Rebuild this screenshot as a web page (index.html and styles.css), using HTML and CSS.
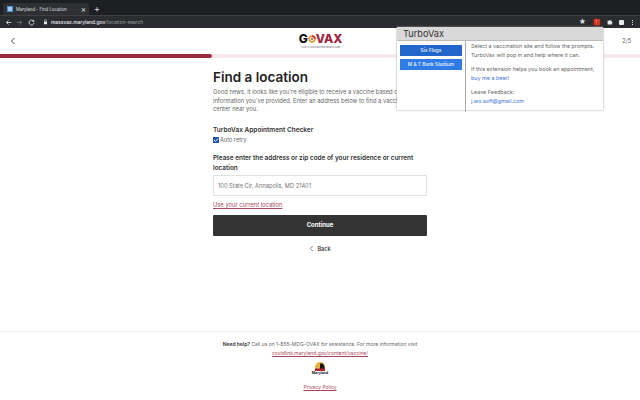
FILE: index.html
```html
<!DOCTYPE html>
<html>
	<head>
		<title>Maryland - Find Location</title>
		<link rel="stylesheet" href="styles.css">
	</head>
	<body>
		<div class="tabstrip">
			<div class="tab">
				<span class="tab-icon"></span>
				<span class="tab-title">Maryland - Find Location</span>
				<span class="tab-close">&#215;</span>
			</div>
			<span class="tab-new">+</span>
		</div>

		<div class="toolbar">
			<svg class="nav-icon" viewBox="0 0 10 10"><path d="M9 5H2M5 2 2 5l3 3" fill="none" stroke="#e8eaed" stroke-width="1.2"/></svg>
			<svg class="nav-icon" viewBox="0 0 10 10"><path d="M1 5h7M5 2l3 3-3 3" fill="none" stroke="#6f7175" stroke-width="1.2"/></svg>
			<svg class="nav-icon" viewBox="0 0 10 10"><path d="M8 3.200A3.500 3.500 0 1 0 8.500 5.500" fill="none" stroke="#e8eaed" stroke-width="1.200"/><path d="M8.800 1v3h-3z" fill="#e8eaed"/></svg>
			<svg class="lock" viewBox="0 0 6 8"><path d="M1 3.500h4v3.500H1z" fill="#e8eaed"/><path d="M1.800 3.500V2a1.200 1.200 0 0 1 2.400 0v1.500" fill="none" stroke="#e8eaed" stroke-width=".8"/></svg>
			<div class="url"><b>massvax.maryland.gov</b>/location-search</div>
			<div class="toolbar-right">
				<span class="star">&#9733;</span>
				<span class="ext-badge"><span class="ext-letter">T</span></span>
				<svg class="puzzle" viewBox="0 0 10 10"><path d="M1 3h2.500a1.200 1.200 0 0 1 2.400 0H8v2.200a1.200 1.200 0 0 1 0 2.400V9H1z" fill="#e8eaed"/></svg>
				<span class="ext-square"></span>
				<span class="menu-dots"><i></i><i></i><i></i></span>
			</div>
		</div>

		<div class="page">
			<div class="page-head">
				<svg class="back-chevron" viewBox="0 0 6 8"><path d="M4.500 1 1.500 4l3 3" fill="none" stroke="#444" stroke-width="1"/></svg>
				<div class="logo">
					<div class="logo-word"><span class="logo-g">G</span><svg class="logo-o" viewBox="0 0 10 10"><circle cx="5" cy="5" r="3.600" fill="none" stroke="#e0a030" stroke-width="2"/><path d="M5 1.400A3.600 3.600 0 0 1 8.600 5" fill="none" stroke="#c8322e" stroke-width="2"/><circle cx="5" cy="5" r="1.200" fill="#c8322e"/></svg><span class="logo-vax">VAX</span></div>
					<div class="logo-sub">LIVE A VACCINATED MARYLAND</div>
				</div>
				<div class="step">2/5</div>
			</div>
			<div class="progress"><div class="progress-fill"></div></div>

			<div class="content">
				<h1>Find a location</h1>
				<p class="intro">Good news, it looks like you're eligible to receive a vaccine based on the information you've provided. Enter an address below to find a vaccination center near you.</p>
				<div class="checker-title">TurboVax Appointment Checker</div>
				<label class="checker-row"><span class="check"><svg viewBox="0 0 6 6"><path d="M1 3l1.500 1.500L5 1.500" fill="none" stroke="#fff" stroke-width=".9"/></svg></span>Auto retry</label>
				<div class="field-label">Please enter the address or zip code of your residence or current location</div>
				<div class="address-input">100 State Cir, Annapolis, MD 21401</div>
				<a class="current-loc">Use your current location</a>
				<div class="continue">Continue</div>
				<div class="back"><svg viewBox="0 0 6 8"><path d="M4.500 1 1.500 4l3 3" fill="none" stroke="#444" stroke-width=".8"/></svg>Back</div>
			</div>

			<div class="footer">
				<div class="help"><b>Need help?</b> Call us on 1-855-MDG-OVAX for assistance. For more information visit</div>
				<a class="footer-link">covidlink.maryland.gov/content/vaccine/</a>
				<div class="md-logo">
					<svg viewBox="0 0 18 9"><path d="M4 9V5a5 5 0 0 1 10 0v4z" fill="#e9b23c"/><path d="M9 1.500h3l1.500 3v4.500H9z" fill="#1a1a1a"/><path d="M4 6.500h10V9H4z" fill="#b3232f"/></svg>
					<div class="md-word">Maryland</div>
				</div>
				<a class="footer-link privacy">Privacy Policy</a>
			</div>
		</div>

		<div class="popup">
			<div class="popup-head">TurboVax</div>
			<div class="popup-body">
				<div class="popup-sites">
					<div class="site-btn">Six Flags</div>
					<div class="site-btn light">M &amp; T Bank Stadium</div>
				</div>
				<div class="popup-text">
					<p>Select a vaccination site and follow the prompts. TurboVax will pop in and help where it can.</p>
					<p>If this extension helps you book an appointment, <a>buy me a beer!</a></p>
					<p>Leave Feedback:<br><a>j.wo.soft@gmail.com</a></p>
				</div>
			</div>
		</div>
	</body>
</html>
```

FILE: styles.css
```css
html, body {
	margin: 0;
	padding: 0;
}

body {
	width: 640px;
	height: 400px;
	overflow: hidden;
	display: flex;
	flex-direction: column;
	background-color: #fff;
	font-family: "Inter", "Liberation Sans", sans-serif;
	color: #444;
}

.tabstrip {
	height: 15px;
	flex: none;
	display: flex;
	align-items: flex-end;
	background-color: #1e1f22;
	padding-left: 3px;
}

.tab {
	width: 86px;
	height: 12px;
	box-sizing: border-box;
	display: flex;
	align-items: center;
	padding: 0 3px 0 4px;
	background-color: #2f3034;
	border-radius: 3px 3px 0 0;
}

.tab-icon {
	width: 4px;
	height: 4px;
	border: 1px solid #4a90d9;
	background-color: #a9c8ea;
	margin-right: 3px;
}

.tab-title {
	flex: 1;
	font-size: 4.300px;
	color: #dfe1e5;
	white-space: nowrap;
}

.tab-close {
	font-size: 8px;
	line-height: 8px;
	color: #dfe1e5;
}

.tab-new {
	margin-left: 5px;
	height: 12px;
	font-size: 9px;
	line-height: 12px;
	color: #dfe1e5;
}

.toolbar {
	height: 13px;
	flex: none;
	display: flex;
	align-items: center;
	padding-left: 4px;
	background-color: #2b2c30;
	border-top: 1px solid #3f4044;
	box-sizing: border-box;
}

.nav-icon {
	width: 7px;
	height: 7px;
	margin-right: 4px;
	margin-left: .5px;
}

.lock {
	width: 5px;
	height: 6px;
	margin-left: 4px;
	margin-right: 3.500px;
}

.url {
	font-size: 4.900px;
	color: #9aa0a6;
	white-space: nowrap;
}

.url b {
	color: #e8eaed;
	font-weight: 500;
}

.toolbar-right {
	margin-left: auto;
	display: flex;
	align-items: center;
	gap: 6px;
	padding-right: 7px;
}

.star {
	font-size: 7px;
	line-height: 8px;
	color: #dfe1e5;
}

.ext-badge {
	width: 9px;
	height: 9px;
	border-radius: 50%;
	background-color: #5a2a26;
	display: flex;
	align-items: center;
	justify-content: center;
}

.ext-letter {
	width: 6px;
	height: 6px;
	border-radius: 1px;
	background-color: #d5361f;
	color: #f4b9a8;
	font-size: 4px;
	line-height: 6px;
	text-align: center;
}

.puzzle {
	width: 6px;
	height: 6px;
}

.ext-square {
	width: 5px;
	height: 5px;
	background-color: #e8eaed;
	border-radius: 1px;
}

.menu-dots {
	display: flex;
	flex-direction: column;
	gap: 1px;
	margin-left: 2px;
}

.menu-dots i {
	width: 1px;
	height: 1px;
	background-color: #dfe1e5;
}

.page {
	flex: 1;
	display: flex;
	flex-direction: column;
}

.page-head {
	height: 26px;
	flex: none;
	display: flex;
	align-items: center;
	justify-content: space-between;
	padding: 0 9px 0 10px;
}

.back-chevron {
	width: 6px;
	height: 8px;
}

.logo {
	text-align: center;
	margin-left: 3px;
}

.logo-word {
	display: flex;
	align-items: center;
	height: 11px;
	font-size: 12px;
	font-weight: 800;
	line-height: 11px;
}

.logo-g {
	color: #111;
}

.logo-o {
	width: 8px;
	height: 8px;
}

.logo-vax {
	color: #a3223c;
}

.logo-sub {
	margin-top: 2px;
	font-size: 2.500px;
	line-height: 3px;
	color: #555;
	white-space: nowrap;
}

.step {
	font-size: 5.500px;
	color: #555;
}

.progress {
	height: 4px;
	flex: none;
	background-color: #f6eaec;
}

.progress-fill {
	width: 212px;
	height: 4px;
	background-color: #9b2c42;
	border-radius: 0 2px 2px 0;
}

.content {
	width: 214px;
	margin-left: 213px;
	flex: 1;
}

h1 {
	margin: 11px 0 0;
	font-size: 13.500px;
	line-height: 16px;
	font-weight: 600;
	color: #222;
}

.intro {
	margin: 3px 0 0;
	font-size: 5.800px;
	line-height: 8.700px;
	color: #666;
}

.checker-title {
	margin-top: 12px;
	font-size: 6.500px;
	line-height: 9px;
	font-weight: 600;
	color: #333;
}

.checker-row {
	display: flex;
	align-items: center;
	height: 9px;
	font-size: 5.600px;
	color: #666;
}

.check {
	width: 6px;
	height: 6px;
	margin-right: 1px;
	background-color: #1f55b5;
	display: flex;
}

.field-label {
	margin-top: 9px;
	font-size: 6.400px;
	line-height: 10px;
	font-weight: 600;
	color: #333;
}

.address-input {
	margin-top: 2px;
	height: 21px;
	box-sizing: border-box;
	border: 1px solid #e2e2e2;
	padding: 0 4px;
	font-size: 5.700px;
	line-height: 19px;
	color: #777;
}

.current-loc {
	display: block;
	margin-top: 5px;
	font-size: 5.800px;
	line-height: 8px;
	color: #a5485c;
	text-decoration: underline;
}

.continue {
	margin-top: 6px;
	height: 20.500px;
	background-color: #333;
	border-radius: 1px;
	color: #fff;
	font-size: 6px;
	font-weight: 700;
	line-height: 20px;
	text-align: center;
}

.back {
	margin-top: 8.500px;
	display: flex;
	align-items: center;
	justify-content: center;
	gap: 3px;
	height: 9px;
	font-size: 5.500px;
	font-weight: 600;
}

.back svg {
	width: 5px;
	height: 7px;
}

.footer {
	height: 69px;
	flex: none;
	box-sizing: border-box;
	border-top: 1px solid #f0f0f0;
	padding-top: 8px;
	display: flex;
	flex-direction: column;
	align-items: center;
}

.help {
	font-size: 5px;
	line-height: 9px;
	color: #666;
}

.help b {
	color: #333;
	font-weight: 600;
}

.footer-link {
	font-size: 5px;
	line-height: 9px;
	color: #a5485c;
	text-decoration: underline;
}

.md-logo {
	margin-top: 4px;
	width: 18px;
	text-align: center;
}

.md-logo svg {
	display: block;
	width: 18px;
	height: 9px;
}

.md-word {
	font-size: 3.500px;
	line-height: 5px;
	font-weight: 700;
	color: #222;
}

.privacy {
	margin-top: 7px;
}

.popup {
	position: absolute;
	left: 397px;
	top: 27px;
	width: 206px;
	height: 83px;
	background-color: #fff;
	box-shadow: 0 0 2px #999;
	display: flex;
	flex-direction: column;
}

.popup-head {
	height: 14px;
	flex: none;
	padding-left: 6px;
	background-color: #d9d9d9;
	border-bottom: 1px solid #bbb;
	box-sizing: border-box;
	font-size: 9.200px;
	line-height: 13px;
	color: #333;
}

.popup-body {
	flex: 1;
	display: flex;
}

.popup-sites {
	width: 69px;
	box-sizing: border-box;
	padding: 4px 3px 0;
	border-right: 1px solid #aaa;
}

.site-btn {
	height: 10.500px;
	margin-bottom: 3.500px;
	background-color: #2366cb;
	color: #dfe9f8;
	font-size: 4.800px;
	font-weight: 600;
	line-height: 10.500px;
	text-align: center;
}

.site-btn.light {
	background-color: #2f7ce6;
}

.popup-text {
	flex: 1;
	padding: 1px 5px;
	font-size: 5.400px;
	line-height: 8.700px;
	color: #666;
}

.popup-text p {
	margin: 0 0 5.700px;
}

.popup-text a {
	color: #3f74d8;
}
```
